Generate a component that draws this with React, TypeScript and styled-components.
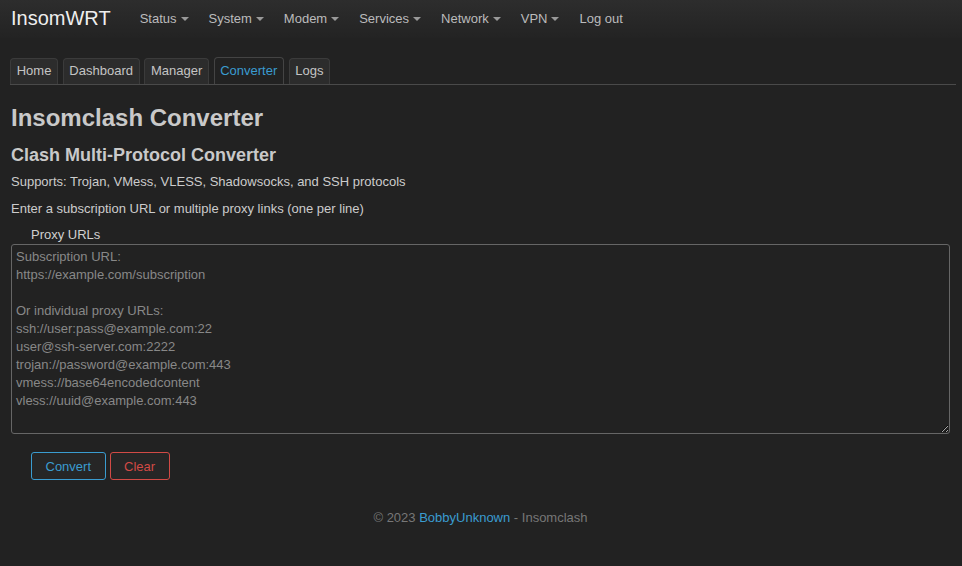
import React from "react";
import styled, { createGlobalStyle } from "styled-components";

const Global = createGlobalStyle`
  html, body { margin: 0; padding: 0; background: #222222; }
  body { font-family: "Liberation Sans", Arial, sans-serif; font-size: 13px; color: #cccccc; }
  * { box-sizing: border-box; }
`;

const Navbar = styled.div`
  height: 38px;
  background: linear-gradient(to bottom, #2d2d2d, #232323);
  display: flex;
  align-items: center;
  padding-left: 11px;
`;

const Brand = styled.a`
  font-size: 20px;
  color: #eeeeee;
  text-decoration: none;
  margin-right: 19px;
  position: relative;
  top: -1px;
`;

const NavList = styled.ul`
  display: flex;
  list-style: none;
  margin: 0;
  padding: 0;
  position: relative;
  top: -1px;
`;

const NavItem = styled.li`
  padding: 0 10px;
  color: #bbbbbc;
  font-size: 13px;
  display: flex;
  align-items: center;
`;

const Caret = styled.span`
  display: inline-block;
  width: 0;
  height: 0;
  margin-left: 4px;
  margin-top: 2px;
  border-left: 4px solid transparent;
  border-right: 4px solid transparent;
  border-top: 4px solid #999999;
`;

const Main = styled.div`
  padding: 20px 6px 0 10px;
`;

const Tabs = styled.ul`
  display: flex;
  list-style: none;
  margin: 0;
  padding: 0;
  border-bottom: 1px solid #4a4a4a;
  height: 27px;
  gap: 4.6px;
  align-items: flex-end;
`;

const Tab = styled.li<{ $active?: boolean }>`
  height: ${(p) => (p.$active ? "27px" : "26px")};
  padding: 0 5.7px 2px;
  display: flex;
  align-items: center;
  font-size: 13px;
  border: 1px solid ${(p) => (p.$active ? "#444444" : "#3b3b3b")};
  border-bottom: none;
  border-radius: 4px 4px 0 0;
  background: ${(p) => (p.$active ? "#222222" : "#2c2c2c")};
  color: ${(p) => (p.$active ? "#3a9cd0" : "#c4c4c4")};
`;

const Content = styled.div`
  padding: 0 6px 0 1px;
`;

const Title = styled.h2`
  margin: 19px 0 0 0;
  font-size: 24px;
  font-weight: bold;
  color: #c9c9c9;
  line-height: 28px;
`;

const Sub = styled.h3`
  margin: 12px 0 0 0;
  font-size: 18px;
  font-weight: bold;
  color: #c9c9c9;
  line-height: 22px;
`;

const Para = styled.p`
  margin: 0;
  line-height: 18px;
  font-size: 13px;
  color: #cccccc;
`;

const ParaStack = styled.div`
  margin-top: 7px;
  display: flex;
  flex-direction: column;
  gap: 9px;
`;

const Field = styled.div`
  margin-top: 9px;
  display: flex;
  flex-direction: column;
`;

const Label = styled.label`
  padding-left: 20px;
  font-size: 13px;
  line-height: 16px;
  color: #d0d0d0;
  margin-bottom: 1px;
`;

const Area = styled.textarea`
  width: 939px;
  height: 190px;
  background: #222222;
  border: 1px solid #666666;
  border-radius: 3px;
  padding: 3px 4px;
  font-family: "Liberation Sans", Arial, sans-serif;
  font-size: 13px;
  line-height: 18px;
  color: #cccccc;
  outline: none;
  &::placeholder { color: #888888; opacity: 1; }
`;

const Buttons = styled.div`
  display: flex;
  gap: 4px;
  margin-top: 18px;
  padding-left: 20px;
`;

const Btn = styled.button<{ $tone: "blue" | "red" }>`
  height: 28px;
  padding: 0 13.5px;
  background: #262626;
  border: 1px solid ${(p) => (p.$tone === "blue" ? "#3a9cd0" : "#d24a45")};
  color: ${(p) => (p.$tone === "blue" ? "#3a9cd0" : "#d24a45")};
  border-radius: 3px;
  font-family: "Liberation Sans", Arial, sans-serif;
  font-size: 13px;
`;

const Footer = styled.div`
  margin-top: 30px;
  text-align: center;
  color: #777777;
  font-size: 13px;
`;

const Link = styled.a`
  color: #3a9cd0;
  text-decoration: none;
`;

const navItems = ["Status", "System", "Modem", "Services", "Network", "VPN"];
const tabs = ["Home", "Dashboard", "Manager", "Converter", "Logs"];

const placeholder = `Subscription URL:
https://example.com/subscription

Or individual proxy URLs:
ssh://user:pass@example.com:22
user@ssh-server.com:2222
trojan://password@example.com:443
vmess://base64encodedcontent
vless://uuid@example.com:443`;

export default function App() {
  return (
    <>
      <Global />
      <Navbar>
        <Brand>InsomWRT</Brand>
        <NavList>
          {navItems.map((n) => (
            <NavItem key={n}>
              {n}
              <Caret />
            </NavItem>
          ))}
          <NavItem>Log out</NavItem>
        </NavList>
      </Navbar>
      <Main>
        <Tabs>
          {tabs.map((t) => (
            <Tab key={t} $active={t === "Converter"}>
              {t}
            </Tab>
          ))}
        </Tabs>
        <Content>
          <Title>Insomclash Converter</Title>
          <Sub>Clash Multi-Protocol Converter</Sub>
          <ParaStack>
            <Para>Supports: Trojan, VMess, VLESS, Shadowsocks, and SSH protocols</Para>
            <Para>Enter a subscription URL or multiple proxy links (one per line)</Para>
          </ParaStack>
          <Field>
            <Label>Proxy URLs</Label>
            <Area placeholder={placeholder} />
          </Field>
          <Buttons>
            <Btn $tone="blue">Convert</Btn>
            <Btn $tone="red">Clear</Btn>
          </Buttons>
          <Footer>
            © 2023 <Link>BobbyUnknown</Link> - Insomclash
          </Footer>
        </Content>
      </Main>
    </>
  );
}
